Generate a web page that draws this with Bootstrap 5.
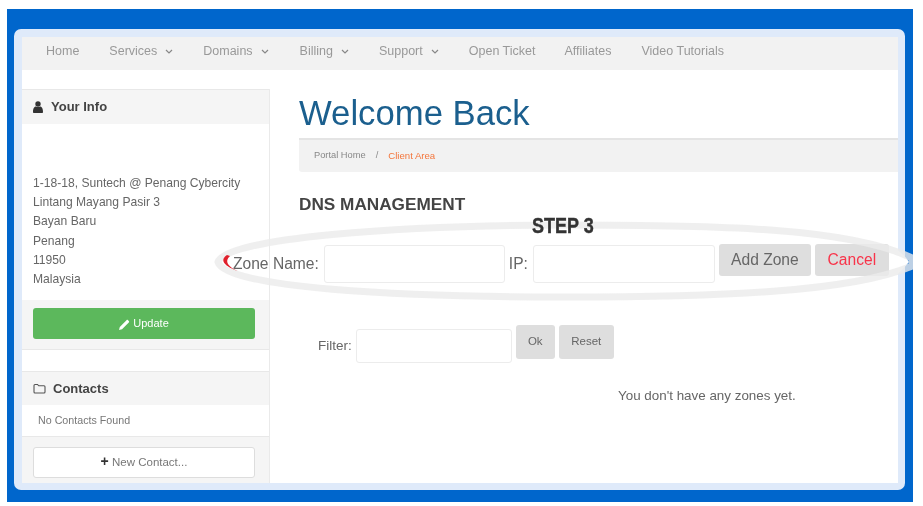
<!DOCTYPE html>
<html lang="en">
<head>
<meta charset="utf-8">
<title>DNS Management</title>
<link href="https://cdn.jsdelivr.net/npm/bootstrap@5.3.0/dist/css/bootstrap.min.css" rel="stylesheet">
<style>
html,body{height:100%;}
body{background:#fff;margin:0;font-family:"Liberation Sans",Arial,sans-serif;color:#555;overflow:hidden;}
.shot-frame{position:relative;margin:9px 10px 0 7px;height:493px;background:#0066cc;padding:20px 8px 12px 7px;overflow:hidden;filter:blur(.45px);}
.shot-panel{height:100%;background:#dfeafa;border-radius:7px;padding:8px 7px 7px 8px;}
.shot-page{height:100%;background:#fff;overflow:hidden;}
.top-nav{height:33px;background:#f2f2f2;padding:0 0 4px 24px;font-size:12.5px;color:#999;}
.top-nav span{display:inline-flex;align-items:center;}
.top-nav svg{margin-left:8px;}
.shot-body{padding-top:19px;}
.side-col{width:248px;flex:none;border-right:1px solid #eaeaea;height:400px;}
.side-box{border-top:1px solid #e8e8e8;border-bottom:1px solid #e8e8e8;}
.side-head{height:34px;background:#f5f5f5;padding-left:11px;font-weight:700;font-size:13px;color:#444;}
.side-head svg{margin-right:8px;}
.addr{height:176px;padding:50px 11px 0;font-size:12.1px;line-height:19.2px;color:#666;}
.side-foot{background:#f5f5f5;height:49px;padding:8px 15px 0 11px;}
.btn-update{height:31px;width:222px;background:#5cb85c;border:0;border-radius:3px;color:#fff;font-size:11px;padding:0;}
.contact-box{margin-top:21px;}
.none-found{height:32px;padding-left:16px;font-size:10.7px;color:#777;border-bottom:1px solid #e8e8e8;}
.side-foot2{background:#f5f5f5;padding:10px 15px 20px 11px;}
.btn-contact{height:31px;width:222px;background:#fff;border:1px solid #ddd;border-radius:3px;color:#777;font-size:11.5px;padding:0;}
.btn-contact b{color:#333;font-size:14px;line-height:1;}
.main-col{padding-left:29px;flex:1;min-width:0;}
.welcome{font-size:34.7px;font-weight:400;color:#1b5f8e;margin:0;height:49px;line-height:49px;}
.crumbs{height:34px;background:#f2f2f2;border-top:2px solid #e4e4e4;border-radius:0 0 0 3px;padding-left:15px;font-size:9.3px;color:#888;}
.crumbs i{font-style:normal;margin:0 10px;}
.crumbs em{font-style:normal;color:#f4763c;font-size:9.6px;}
.dns-title{font-size:17.2px;font-weight:700;color:#444;margin:22px 0 0;line-height:20px;}
.zone-form{margin-top:31px;margin-left:-66px;font-size:15.6px;color:#666;height:38px;}
.fake-input{height:38px;background:#fff;border:1px solid #ececec;border-radius:3px;}
.in-a{width:181px;margin:0 4px 0 5px;}
.in-b{width:182px;margin:0 4px 0 5px;}
.btn-grey{background:#dedede;border:0;border-radius:3px;color:#666;padding:0 0 1px;}
.btn-add{width:92px;height:32px;font-size:15.6px;margin-top:-1px;}
.btn-cancel{width:74px;height:32px;font-size:15.6px;color:#f8344a;margin-left:4px;margin-top:-1px;}
.filter-row{margin-top:46px;margin-left:19px;font-size:13.5px;color:#666;height:34px;}
.in-c{width:156px;height:34px;margin:0 4px;}
.btn-s{height:34px;font-size:11.5px;margin-top:-4px;}
.btn-ok{width:39px;}
.btn-reset{width:55px;margin-left:4px;}
.no-zones{margin:23px 0 0 319px;font-size:13.4px;color:#666;}
.step-label{position:absolute;left:525px;top:205px;font-weight:700;font-size:22.500px;line-height:24px;color:#333;margin:0;transform:scaleX(.8);transform-origin:left center;-webkit-text-stroke:.4px #333;}
.ring{position:absolute;left:0;top:0;pointer-events:none;}
</style>
</head>
<body>
<div class="shot-frame">
  <div class="shot-panel">
    <div class="shot-page">
      <nav class="top-nav d-flex align-items-center">
        <span style="margin-right:30px">Home</span>
        <span style="margin-right:30px">Services<svg width="8" height="5" viewBox="0 0 8 5"><path d="M1 1l3 3 3-3" fill="none" stroke="#888" stroke-width="1.2"/></svg></span>
        <span style="margin-right:31px">Domains<svg width="8" height="5" viewBox="0 0 8 5"><path d="M1 1l3 3 3-3" fill="none" stroke="#888" stroke-width="1.2"/></svg></span>
        <span style="margin-right:30px">Billing<svg width="8" height="5" viewBox="0 0 8 5"><path d="M1 1l3 3 3-3" fill="none" stroke="#888" stroke-width="1.2"/></svg></span>
        <span style="margin-right:30px">Support<svg width="8" height="5" viewBox="0 0 8 5"><path d="M1 1l3 3 3-3" fill="none" stroke="#888" stroke-width="1.2"/></svg></span>
        <span style="margin-right:29px">Open Ticket</span>
        <span style="margin-right:30px">Affiliates</span>
        <span>Video Tutorials</span>
      </nav>
      <div class="shot-body d-flex">
        <aside class="side-col">
          <div class="side-box">
            <div class="side-head d-flex align-items-center"><svg width="10" height="12" viewBox="0 0 10 12"><circle cx="5" cy="3" r="2.7" fill="#333"/><path d="M0 11c0-4 1.500-5.500 3-5.500 1 .8 3 .8 4 0 1.500 0 3 1.500 3 5.500 0 .6-.4 1-1 1H1c-.6 0-1-.4-1-1z" fill="#333"/></svg>Your Info</div>
            <div class="addr">1-18-18, Suntech @ Penang Cybercity<br>Lintang Mayang Pasir 3<br>Bayan Baru<br>Penang<br>11950<br>Malaysia</div>
            <div class="side-foot"><button class="btn btn-update" type="button"><svg width="11" height="11" viewBox="0 0 11 11"><path d="M0 11l.8-3L7.500 1.200c.5-.5 1-.5 1.500 0l.8.8c.5.500.5 1 0 1.500L3 10.200z" fill="#fff"/></svg> Update</button></div>
          </div>
          <div class="side-box contact-box">
            <div class="side-head d-flex align-items-center" style="height:33px"><svg width="13" height="11" viewBox="0 0 13 11" style="margin-right:7px"><path d="M1 2.500c0-.6.4-1 1-1h2.500l1.200 1.300H11c.6 0 1 .4 1 1V9c0 .6-.4 1-1 1H2c-.6 0-1-.4-1-1z" fill="none" stroke="#555" stroke-width="1.100"/></svg>Contacts</div>
            <div class="none-found d-flex align-items-center">No Contacts Found</div>
            <div class="side-foot2"><button class="btn btn-contact" type="button"><b>+</b> New Contact...</button></div>
          </div>
        </aside>
        <main class="main-col">
          <h1 class="welcome">Welcome Back</h1>
          <div class="crumbs d-flex align-items-center">Portal Home<i>/</i><em>Client Area</em></div>
          <h2 class="dns-title">DNS MANAGEMENT</h2>
          <div class="zone-form d-flex align-items-center">
            <span>Zone Name:</span><div class="fake-input in-a"></div>
            <span>IP:</span><div class="fake-input in-b"></div>
            <button class="btn btn-grey btn-add align-self-start" type="button">Add Zone</button>
            <button class="btn btn-grey btn-cancel align-self-start" type="button">Cancel</button>
          </div>
          <div class="filter-row d-flex align-items-center">
            <span>Filter:</span><div class="fake-input in-c"></div>
            <button class="btn btn-grey btn-s btn-ok align-self-start" type="button">Ok</button>
            <button class="btn btn-grey btn-s btn-reset align-self-start" type="button">Reset</button>
          </div>
          <p class="no-zones">You don't have any zones yet.</p>
        </main>
      </div>
    </div>
  </div>
  <svg class="ring" width="906" height="493" viewBox="7 9 906 493">
    <path d="M893 246C900 252 906 257 909 262 905 267 900 272 893 278Z" fill="#fff"/>
    <path d="M218 262C225 238 400 225 565 225 720 225 850 228 912 258L912 266C850 292 720 297 565 297 400 297 225 288 218 262Z" fill="none" stroke="#ebebeb" stroke-opacity=".8" stroke-width="7"/>
    <path d="M227 255C221 259 221 265 238 271 228 267 224 261 230 256Z" fill="#e0202c"/>
  </svg>
  <p class="step-label">STEP 3</p>
</div>
</body>
</html>
